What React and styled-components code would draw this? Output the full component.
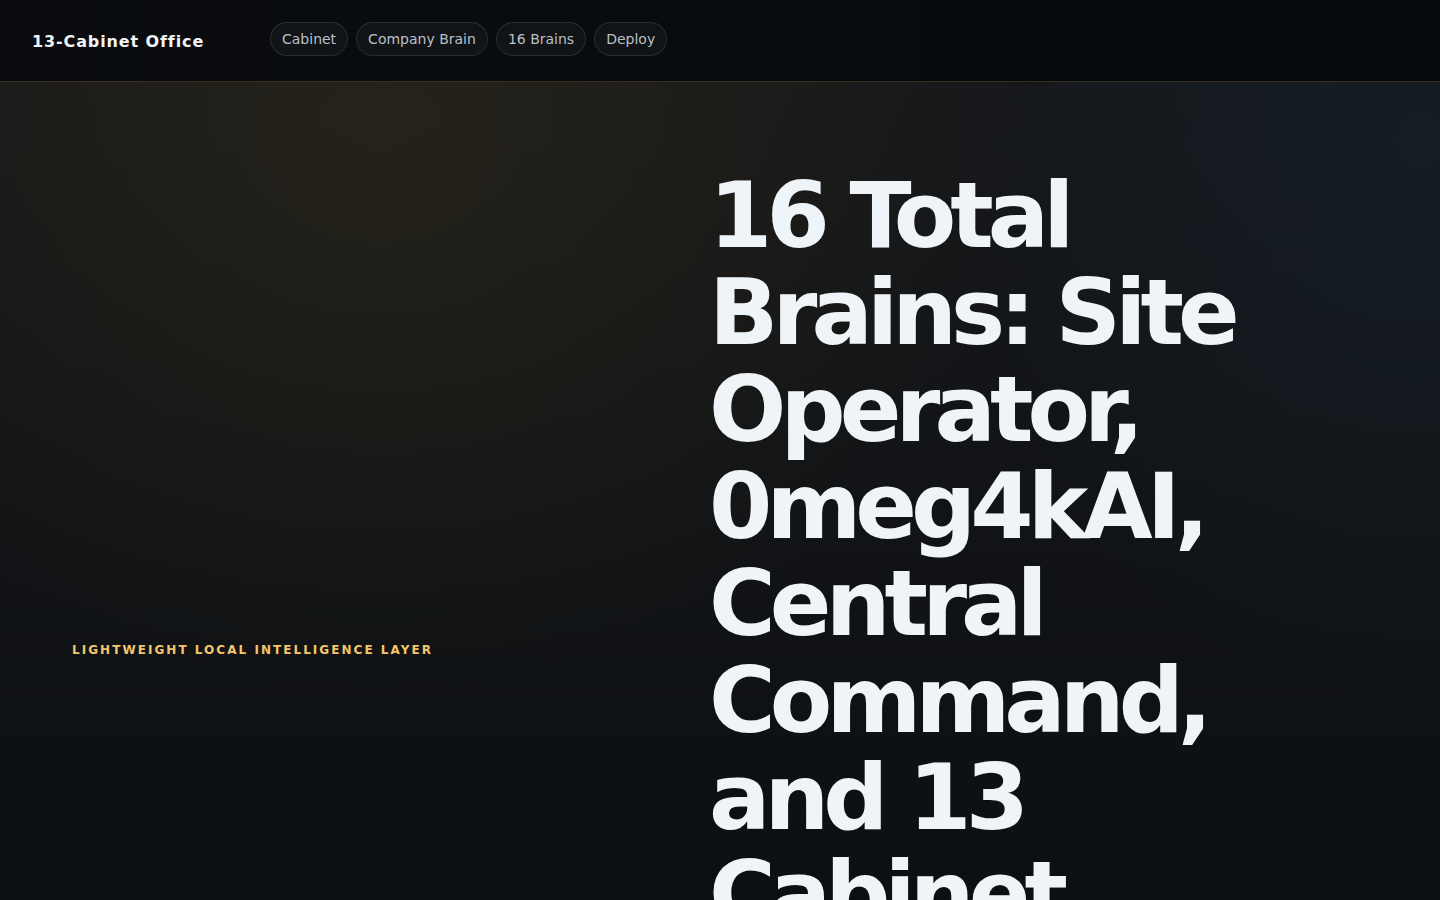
import React from "react";
import styled, { createGlobalStyle } from "styled-components";

const Global = createGlobalStyle`
  html, body { margin: 0; padding: 0; background: #0a0d10; }
  body { font-family: "DejaVu Sans", sans-serif; overflow: hidden; }
`;

const Page = styled.div`
  width: 1440px;
  height: 900px;
  overflow: hidden;
  display: flex;
  flex-direction: column;
  background: #080b0e;
`;

const Nav = styled.header`
  height: 81px;
  flex: none;
  display: flex;
  align-items: center;
  padding: 0 32px;
  background: linear-gradient(90deg, #0a0c0f, #070a0d);
  border-bottom: 1px solid rgba(160, 130, 60, 0.3);
`;

const Brand = styled.div`
  color: #f1f4f6;
  font-weight: 700;
  font-size: 16px;
  letter-spacing: 0.055em;
  width: 238px;
  margin-top: 2px;
`;

const Pills = styled.nav`
  display: flex;
  gap: 8px;
  margin-top: -4px;
`;

const Pill = styled.a`
  height: 32px;
  display: flex;
  align-items: center;
  padding: 0 11px;
  border-radius: 999px;
  border: 1px solid rgba(255, 255, 255, 0.1);
  background: rgba(255, 255, 255, 0.035);
  color: #b9c0c6;
  font-size: 14px;
`;

const Hero = styled.main`
  flex: 1;
  display: grid;
  grid-template-columns: 637px 1fr;
  padding: 0 72px;
  background:
    radial-gradient(ellipse 900px 800px at 380px 40px, rgba(52, 46, 26, 0.5), transparent 72%),
    radial-gradient(ellipse 650px 800px at 1420px 60px, rgba(20, 34, 44, 0.6), transparent 72%),
    linear-gradient(180deg, #16171a 0%, #0b0e11 100%);
`;

const Left = styled.div`
  padding-top: 561px;
`;

const Eyebrow = styled.div`
  color: #f3c66b;
  font-size: 12px;
  font-weight: 700;
  letter-spacing: 0.17em;
  text-transform: uppercase;
`;

const Title = styled.h1`
  margin: 0;
  padding-top: 85px;
  width: 600px;
  color: #eef4f7;
  font-size: 91px;
  line-height: 97px;
  font-weight: 700;
  letter-spacing: -0.065em;
`;

export default function App() {
  return (
    <Page>
      <Global />
      <Nav>
        <Brand>13-Cabinet Office</Brand>
        <Pills>
          {["Cabinet", "Company Brain", "16 Brains", "Deploy"].map((p) => (
            <Pill key={p}>{p}</Pill>
          ))}
        </Pills>
      </Nav>
      <Hero>
        <Left>
          <Eyebrow>Lightweight local intelligence layer</Eyebrow>
        </Left>
        <Title>
          16 Total Brains: Site Operator, 0meg4kAI, Central Command, and 13 Cabinet Members
        </Title>
      </Hero>
    </Page>
  );
}
